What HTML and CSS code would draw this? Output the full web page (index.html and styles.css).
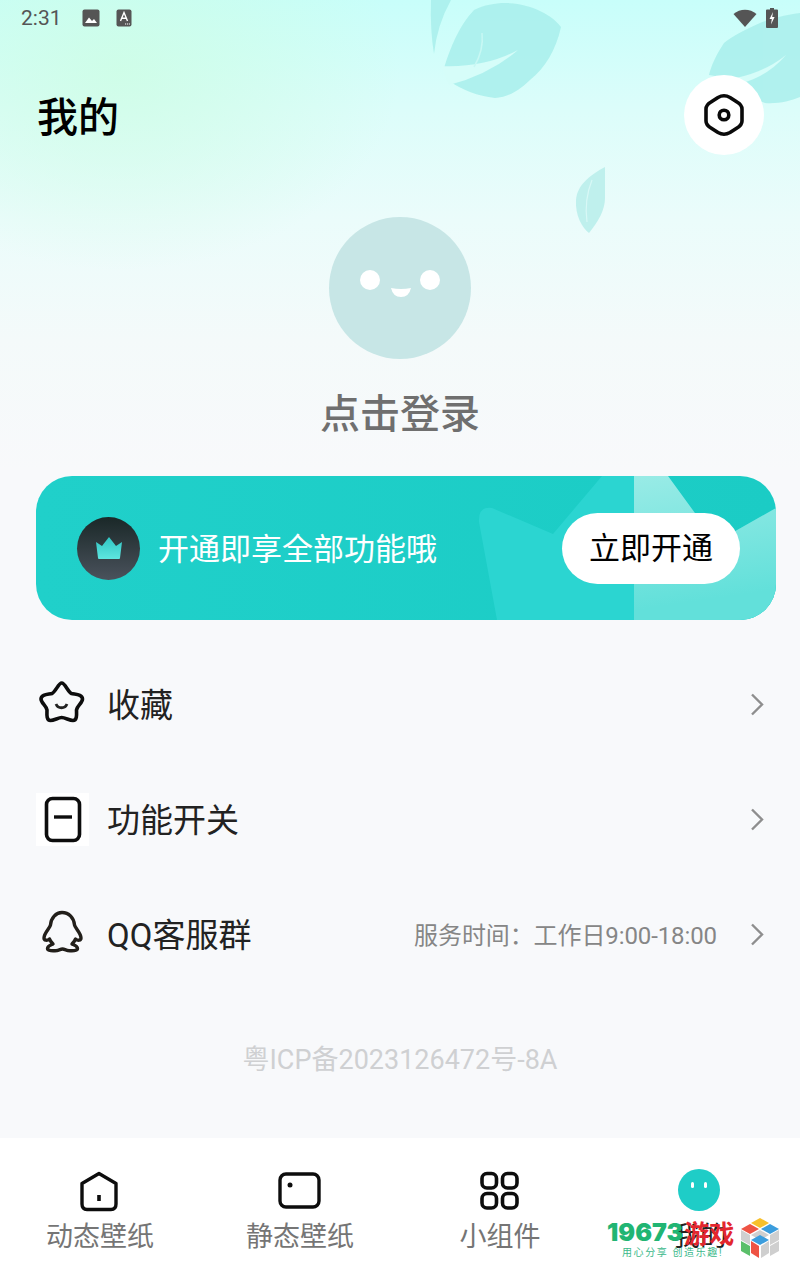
FILE: index.html
```html
<!DOCTYPE html>
<html lang="zh-CN">

<head>
    <meta charset="UTF-8">
    <meta name="viewport" content="width=device-width, initial-scale=1.0">
    <title>我的</title>
    <link rel="stylesheet" href="styles.css">
</head>

<body>
    <div class="page">
        <!-- leaves behind the header -->
        <svg class="leaves" width="800" height="240" viewBox="0 0 800 240">
            <g fill="#a9efeb" opacity="0.85">
                <path d="M431 0 H451 Q437 25 434 54 Q430 30 431 0Z" />
                <path d="M505 3 C525 3 550 12 561 27 C556 50 545 68 530 80 C518 92 505 98 495 98 C478 96 462 90 451 82 L444 68 C450 48 460 24 474 10 C484 5 495 3 505 3Z" />
                <path d="M800 13 C785 15 772 18 760 23 C745 30 732 36 724 43 C716 55 711 66 709 75 L740 80 C748 92 756 100 765 103 C778 104 790 101 800 97Z" />
            </g>
            <!-- veins -->
            <path d="M441 66 Q485 68 518 50 Q490 74 449 85Z" fill="#d6fdf9" />
            <path d="M482 33 Q484 50 474 67" fill="none" stroke="#c8f8f4" stroke-width="1.5" />
            <path d="M736 78 Q765 72 786 55 Q768 76 742 83Z" fill="#d6fdf9" />
            <path d="M605 167 C590 175 577 185 576 200 C575 215 582 228 589 233 C598 222 605 210 605 198Z" fill="#bff0ed" />
            <path d="M592 180 Q584 200 587 222" fill="none" stroke="#d8f8f6" stroke-width="1.2" />
        </svg>

        <div class="status-bar">
            <span class="time">2:31</span>
            <svg class="st-pic" width="18" height="18" viewBox="0 0 18 18">
                <rect x="0.5" y="0.5" width="17" height="17" rx="2" fill="#555" />
                <path d="M3 14 L7 8.5 L10 12 L12 10 L15 14Z" fill="#fff" />
            </svg>
            <svg class="st-a" width="16" height="18" viewBox="0 0 16 18">
                <rect x="0.5" y="0.5" width="15" height="17" rx="2" fill="#555" />
                <path d="M4.5 12 L8 3.5 L11.5 12 M6 9.2 H10" fill="none" stroke="#fff" stroke-width="1.4" />
                <path d="M9 15 H14" stroke="#fff" stroke-width="1.2" stroke-dasharray="1.2 0.8" />
            </svg>
            <span class="status-space"></span>
            <svg class="st-wifi" width="24" height="18" viewBox="0 0 24 18">
                <path d="M0.5 5 C7 -0.8 17 -0.8 23.5 5 L12 18Z" fill="#555" />
            </svg>
            <svg class="st-bat" width="12" height="20" viewBox="0 0 12 20">
                <path d="M4 0 H8 V1.5 H11 Q12 1.5 12 2.5 V19 Q12 20 11 20 H1 Q0 20 0 19 V2.5 Q0 1.5 1 1.5 H4Z" fill="#555" />
                <path d="M7 4 L3.5 11 H5.8 L5 16.5 L8.6 9 H6.2Z" fill="#fff" />
            </svg>
        </div>

        <div class="head">
            <h1>我的</h1>
            <div class="settings">
                <svg width="40" height="44" viewBox="0 0 40 44">
                    <path d="M14 4.5 Q20 1 26 4.5 L33 9 Q38 12 38 16 V28 Q38 32 33 35 L26 39.5 Q20 43 14 39.5 L7 35 Q2 32 2 28 V16 Q2 12 7 9Z" fill="none" stroke="#0a0a0a" stroke-width="3.6" stroke-linejoin="round" />
                    <circle cx="20" cy="22" r="4.8" fill="none" stroke="#0a0a0a" stroke-width="3.6" />
                </svg>
            </div>
        </div>

        <div class="profile">
            <div class="avatar">
                <svg width="142" height="142" viewBox="0 0 142 142">
                    <circle cx="71" cy="71" r="71" fill="#c7e6e6" />
                    <circle cx="41" cy="63" r="10" fill="#fff" />
                    <circle cx="101" cy="63" r="10" fill="#fff" />
                    <path d="M62 71 Q72 73 82 71 Q80 80 72 80 Q64 80 62 71Z" fill="#fff" />
                </svg>
            </div>
            <div class="login">点击登录</div>
        </div>

        <div class="vip-card">
            <svg class="vip-bg" width="740" height="144" viewBox="0 0 740 144">
                <defs>
                    <linearGradient id="vipLight" x1="0" y1="0" x2="0.3" y2="1">
                        <stop offset="0" stop-color="#a2ede8" />
                        <stop offset="1" stop-color="#62e0da" />
                    </linearGradient>
                    <clipPath id="vipRight">
                        <rect x="598" y="0" width="142" height="144" />
                    </clipPath>
                </defs>
                <path d="M461 144 L443 46 Q442 30 456 32 L517 58 L566 0 H632 L680 66 L740 32 V144Z" fill="#2bd5d1" />
                <path d="M461 144 L443 46 Q442 30 456 32 L517 58 L566 0 H632 L680 66 L740 32 V144Z" fill="url(#vipLight)" clip-path="url(#vipRight)" />
            </svg>
            <div class="crown-badge">
                <svg width="30" height="24" viewBox="0 0 30 24">
                    <defs>
                        <linearGradient id="crownFill" x1="0" y1="0" x2="0" y2="1">
                            <stop offset="0" stop-color="#2fc4c2" />
                            <stop offset="1" stop-color="#5ee6e0" />
                        </linearGradient>
                    </defs>
                    <path d="M2 6 L8 10 L15 1 L22 10 L28 6 L26 22 Q26 23 25 23 H5 Q4 23 4 22Z" fill="url(#crownFill)" />
                </svg>
            </div>
            <span class="vip-text">开通即享全部功能哦</span>
            <span class="vip-btn">立即开通</span>
        </div>

        <div class="menu">
            <div class="menu-row">
                <svg class="menu-icon" width="53" height="53" viewBox="0 0 53 53">
                    <path d="M25.7 5 C29 5 32 14 35.5 15.5 C39 16.5 46.5 16 46.5 21 C46.5 25 41 28 40.5 32 C40.5 35 41.5 42.5 37 42.5 C33.5 42.5 29 39.5 25.7 39.5 C22.5 39.5 18 42.5 14.5 42.5 C10 42.5 11 35 11 32 C10.5 28 5 25 5 21 C5 16 12.5 16.5 16 15.5 C19.5 14 22.5 5 25.7 5Z" fill="none" stroke="#0d0d0d" stroke-width="3.6" />
                    <path d="M20 26 C22 31 29 31 31 26" fill="none" stroke="#222" stroke-width="2.8" />
                </svg>
                <span class="menu-label">收藏</span>
                <svg class="chevron" width="14" height="23" viewBox="0 0 14 23">
                    <path d="M2 1.5 L12 11.5 L2 21.5" fill="none" stroke="#8e8e8e" stroke-width="2.4" />
                </svg>
            </div>
            <div class="menu-row">
                <svg class="menu-icon icon-white" width="53" height="53" viewBox="0 0 53 53">
                    <rect x="10.5" y="5.5" width="33" height="42" rx="6" fill="none" stroke="#0d0d0d" stroke-width="3.6" />
                    <path d="M18 24 H36" stroke="#0d0d0d" stroke-width="3.4" />
                </svg>
                <span class="menu-label">功能开关</span>
                <svg class="chevron" width="14" height="23" viewBox="0 0 14 23">
                    <path d="M2 1.5 L12 11.5 L2 21.5" fill="none" stroke="#8e8e8e" stroke-width="2.4" />
                </svg>
            </div>
            <div class="menu-row">
                <svg class="menu-icon" width="53" height="53" viewBox="0 0 53 53">
                    <path d="M26 4.5 C33 4.5 38 10 38.5 17 C39 20 45 25 45 30 C45 32.5 42 33 39.5 31 C39 33 37 35 36 36 C38 37 41.5 38 41.5 40.5 C41.5 43 36 43 32 42.5 C30 42 28 41 26.5 41 C25 41 23 42 21 42.5 C17 43 11.5 43 11.5 40.5 C11.5 38 15 37 17 36 C16 35 14 33 13.5 31 C11 33 8 32.5 8 30 C8 25 14 20 14.5 17 C15 10 20 4.5 26 4.5Z" fill="none" stroke="#221f1a" stroke-width="3.4" stroke-linejoin="round" />
                </svg>
                <span class="menu-label">QQ客服群</span>
                <span class="menu-note">服务时间：工作日9:00-18:00</span>
                <svg class="chevron" width="14" height="23" viewBox="0 0 14 23">
                    <path d="M2 1.5 L12 11.5 L2 21.5" fill="none" stroke="#8e8e8e" stroke-width="2.4" />
                </svg>
            </div>
        </div>

        <div class="icp">粤ICP备2023126472号-8A</div>

        <div class="tab-bar">
            <div class="tab">
                <svg width="48" height="48" viewBox="0 0 48 48">
                    <path d="M24 7.5 L41 17.5 V38 Q41 43.5 36 43.5 H12 Q7 43.5 7 38 V17.5Z" fill="none" stroke="#0d0d0d" stroke-width="3.4" stroke-linejoin="round" />
                    <path d="M24 29 V35" stroke="#0d0d0d" stroke-width="3.6" />
                </svg>
                <span class="tab-label">动态壁纸</span>
            </div>
            <div class="tab">
                <svg width="48" height="48" viewBox="0 0 48 48">
                    <rect x="5" y="8" width="39" height="33" rx="6" fill="none" stroke="#0d0d0d" stroke-width="3.4" />
                    <circle cx="15" cy="19" r="2.5" fill="#0d0d0d" />
                </svg>
                <span class="tab-label">静态壁纸</span>
            </div>
            <div class="tab">
                <svg width="48" height="48" viewBox="0 0 48 48">
                    <rect x="7" y="7.5" width="14.5" height="14.5" rx="5" fill="none" stroke="#0d0d0d" stroke-width="3.6" />
                    <rect x="27.5" y="7.5" width="14.5" height="14.5" rx="5" fill="none" stroke="#0d0d0d" stroke-width="3.6" />
                    <rect x="7" y="27.5" width="14.5" height="14.5" rx="5" fill="none" stroke="#0d0d0d" stroke-width="3.6" />
                    <rect x="27.5" y="27.5" width="14.5" height="14.5" rx="5" fill="none" stroke="#0d0d0d" stroke-width="3.6" />
                </svg>
                <span class="tab-label">小组件</span>
            </div>
            <div class="tab">
                <svg width="48" height="48" viewBox="0 0 48 48">
                    <circle cx="24" cy="24" r="21" fill="#1ecdc7" />
                    <rect x="16" y="16" width="3" height="6" rx="1.5" fill="#fff" />
                    <rect x="29" y="16" width="3" height="6" rx="1.5" fill="#fff" />
                </svg>
                <span class="tab-label tab-active">我的</span>
            </div>
        </div>

        <!-- site watermark stamped over the corner -->
        <div class="watermark">
            <div class="wm-text">
                <div class="wm-title"><span class="wm-num">19673</span><span class="wm-cn">游戏</span></div>
                <div class="wm-sub">用心分享 创造乐趣!</div>
            </div>
            <svg class="wm-cube" width="38" height="40" viewBox="0 0 38 40">
                <path d="M19 0 L28 5 L19 10 L10 5Z" fill="#f7c02c" />
                <path d="M9 6 L18 11 L9 16 L0 11Z" fill="#ee5344" />
                <path d="M29 6 L38 11 L29 16 L20 11Z" fill="#3b9ddd" />
                <path d="M19 12 L28 17 L19 22 L10 17Z" fill="#cfcfcf" />
                <path d="M0 12 L9 17 V27 L0 22Z" fill="#cfcfcf" />
                <path d="M38 12 L29 17 V27 L38 22Z" fill="#cfcfcf" />
                <path d="M19 17 L28 22 L19 27 L10 22Z" fill="#3b9ddd" />
                <path d="M0 23 L9 28 V38 L0 33Z" fill="#5bbf6a" />
                <path d="M10 23 L18 28 V40 L10 35Z" fill="#ee5344" />
                <path d="M20 28 L28 23 V35 L20 40Z" fill="#cfcfcf" />
                <path d="M29 28 L38 23 V33 L29 38Z" fill="#cfcfcf" />
            </svg>
        </div>
    </div>
</body>

</html>
```

FILE: styles.css
```css
* {
    box-sizing: border-box;
}

body {
    margin: 0;
    font-family: Roboto, "Noto Sans CJK SC", sans-serif;
}

.page {
    position: relative;
    width: 800px;
    height: 1280px;
    overflow: hidden;
    display: flex;
    flex-direction: column;
    background-color: #f8f9fb;
    background-image:
        radial-gradient(ellipse 280px 200px at 120px 70px, rgba(205, 253, 226, 0.75), rgba(205, 253, 226, 0)),
        linear-gradient(180deg, #c8fefa 0, #dcfdfa 110px, #ebfcfb 220px, #f4fafa 340px, #f8f9fb 470px);
    background-repeat: no-repeat;
}

.leaves {
    position: absolute;
    top: 0;
    left: 0;
    filter: blur(0.6px);
}

/* status bar */
.status-bar {
    position: relative;
    height: 36px;
    display: flex;
    align-items: center;
    padding: 0 22px 0 21px;
}

.time {
    font-size: 21px;
    color: #555;
    width: 61px;
}

.st-a {
    margin-left: 16px;
}

.status-space {
    flex: 1;
}

.st-bat {
    margin-left: 9px;
}

/* header */
.head {
    position: relative;
    display: flex;
    align-items: center;
    justify-content: space-between;
    height: 80px;
    margin-top: 39px;
    padding: 0 36px 0 37px;
}

h1 {
    margin: 0 0 2px;
    font-size: 41px;
    font-weight: 500;
    color: #000;
}

.settings {
    width: 80px;
    height: 80px;
    border-radius: 50%;
    background: #fff;
    display: flex;
    align-items: center;
    justify-content: center;
}

.profile {
    position: relative;
    display: flex;
    flex-direction: column;
    align-items: center;
    margin-top: 62px;
}

.avatar {
    width: 142px;
    height: 142px;
}

.avatar svg {
    display: block;
}

.login {
    margin-top: 32px;
    font-size: 40px;
    line-height: 48px;
    font-weight: 500;
    color: #6f6f6f;
}

/* vip card */
.vip-card {
    position: relative;
    overflow: hidden;
    display: flex;
    align-items: center;
    width: 740px;
    height: 144px;
    margin: 37px 0 0 36px;
    padding: 0 36px 0 41px;
    border-radius: 36px;
    background: linear-gradient(90deg, #20d0ca, #1bccc5);
}

.vip-bg {
    position: absolute;
    top: 0;
    left: 0;
}

.crown-badge {
    position: relative;
    width: 63px;
    height: 63px;
    border-radius: 50%;
    background: linear-gradient(180deg, #1a2828, #4a525c);
    display: flex;
    align-items: center;
    justify-content: center;
}

.vip-text {
    position: relative;
    flex: 1;
    margin-left: 18px;
    padding-bottom: 4px;
    font-size: 31px;
    color: #fff;
}

.vip-btn {
    position: relative;
    width: 178px;
    height: 71px;
    border-radius: 36px;
    background: #fff;
    color: #000;
    font-size: 31px;
    line-height: 71px;
    text-align: center;
}

/* menu */
.menu {
    margin-top: 27px;
}

.menu-row {
    display: flex;
    align-items: center;
    height: 115px;
    padding: 0 36px;
}

.icon-white {
    background: #fff;
}

.menu-label {
    flex: 1;
    margin-left: 18px;
    padding-bottom: 4px;
    font-size: 33px;
    color: #222;
}

.menu-note {
    padding-bottom: 2px;
    font-size: 24px;
    letter-spacing: -0.1px;
    color: #868686;
}

.chevron {
    margin-left: 33px;
}

.icp {
    margin-top: 49px;
    text-align: center;
    font-size: 27px;
    line-height: 38px;
    color: #cfd0d2;
}

/* bottom tabs */
.tab-bar {
    margin-top: auto;
    display: flex;
    height: 142px;
    background: #fff;
}

.tab {
    flex: 1;
    display: flex;
    flex-direction: column;
    align-items: center;
    padding-top: 28px;
}

.tab svg {
    margin-left: -2px;
}

.tab-label {
    margin-top: 4px;
    font-size: 27px;
    line-height: 38px;
    color: #757575;
}

.tab-active {
    color: #222;
}

/* watermark */
.watermark {
    position: absolute;
    left: 607px;
    top: 1218px;
    display: flex;
    gap: 7px;
}

.wm-title {
    display: flex;
    align-items: center;
    height: 28px;
    white-space: nowrap;
}

.wm-num {
    font-family: Inter, sans-serif;
    font-size: 25px;
    font-weight: 900;
    color: #21b573;
}

.wm-cn {
    margin-left: 1px;
    font-size: 25px;
    font-weight: 700;
    color: #e3262e;
}

.wm-sub {
    margin-top: 1px;
    padding-left: 15px;
    font-size: 10px;
    line-height: 12px;
    letter-spacing: 1.6px;
    color: #3bb98a;
    white-space: nowrap;
}
```
